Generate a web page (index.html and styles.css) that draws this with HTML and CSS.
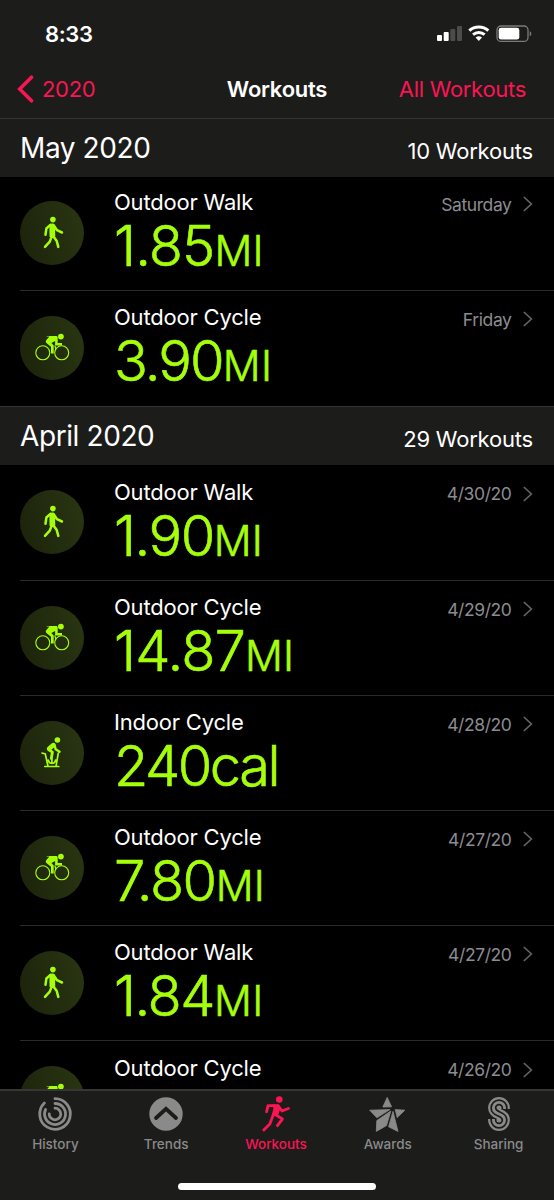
FILE: index.html
```html
<!DOCTYPE html>
<html lang="en">
<head>
<meta charset="utf-8">
<title>Workouts</title>
<link rel="stylesheet" href="styles.css">
</head>
<body>
<svg class="defs" width="0" height="0" aria-hidden="true">
  <symbol id="walk" viewBox="0 0 64 64">
    <circle cx="32.9" cy="18.6" r="2.8"/>
    <path d="M29.4 23.4c1.6-1.2 4.4-1.1 5.5.3l.4 11.8-5.8.6z"/>
    <path class="limb" d="M30.4 23.9l-4 3.6-.9 6.3M34 24.8l3 4.4 5 2.3M32 34.6l-2.2 6-4.8 5.2M33 34.9l3.6 4.8 1.7 6.2"/>
  </symbol>
  <symbol id="cycle" viewBox="0 0 64 64">
    <circle class="wheel" cx="22.8" cy="36.8" r="7"/>
    <circle class="wheel" cx="41.7" cy="36.8" r="7"/>
    <circle cx="40.9" cy="20.6" r="2.9"/>
    <path d="M28.6 20h7.4c1 0 1.7.7 1.7 1.7v5.2H42v2.6h-6.9v-4.6l-3.7 2.2 2.3 2.3v8.2H31v-6.8l-4.6-3.9c-1-.9-.8-1.9 0-2.8l3-3.6H26.6V20z"/>
    <path class="wheel" d="M34.8 29.5l1.2 4"/>
  </symbol>
  <symbol id="indoor" viewBox="0 0 64 64">
    <circle cx="37.4" cy="19" r="2.8"/>
    <g class="body"><path stroke-width="4.6" d="M33.4 24.1l-4.3 3.7"/><path stroke-width="2.8" d="M29 28.8l3.4 2.4-1.1 6.4"/><path stroke-width="2.4" d="M34.7 24.4l.9 3.9 4 2.4"/></g>
    <path class="frame" d="M22 32l3.3 1 2.6 11.8M38.3 32.2l-2.2 12.6M24.8 45.5h14M28.3 39.2c.8 4.4 6.4 4.4 7.3 0M31.9 38v3"/>
  </symbol>
  <symbol id="chev" viewBox="0 0 10 16"><path d="M.8 1l7.6 7-7.6 7" fill="none" stroke="#66666a" stroke-width="1.6"/></symbol>
</svg>
<div class="phone">
  <header class="top">
    <div class="status">
      <span class="time">8:33</span>
      <svg class="indicators" width="96" height="18" viewBox="0 0 96 18">
        <g fill="#fff"><rect x="0" y="10" width="5" height="6" rx="1"/><rect x="6.7" y="7" width="5" height="9" rx="1"/></g>
        <g fill="#4c4c4b"><rect x="13.3" y="4" width="5" height="12" rx="1"/><rect x="20" y="1" width="5" height="15" rx="1"/></g>
        <g fill="none" stroke="#fff" stroke-width="3"><path d="M32.3 5.6a14 14 0 0 1 19 0"/><path d="M36 9.7a8.7 8.7 0 0 1 11.6 0"/></g>
        <path d="M38.6 12.5a5 5 0 0 1 6.4 0L41.8 16z" fill="#fff"/>
        <rect x="60" y="1" width="31" height="15.4" rx="4" fill="none" stroke="#7b7b7a" stroke-width="1.3"/>
        <rect x="61.7" y="2.8" width="20.6" height="11.8" rx="2.4" fill="#fff"/>
        <path d="M92.7 6.2c2.2.8 2.2 4.2 0 5z" fill="#7b7b7a"/>
      </svg>
    </div>
    <nav class="nav">
      <a class="back"><svg width="17" height="28" viewBox="0 0 17 28"><path d="M14.5 2.2L2.7 14l11.8 11.8" fill="none" stroke="#fa1553" stroke-width="3.6" stroke-linecap="round"/></svg><span>2020</span></a>
      <h1>Workouts</h1>
      <a class="all">All Workouts</a>
    </nav>
  </header>
  <main class="list">
    <div class="section pinned"><h2>May 2020</h2><span>10 Workouts</span></div>
    <div class="row"><svg class="badge"><use href="#walk"/></svg><div class="info"><div class="name">Outdoor Walk</div><div class="value wide">1.85<small>MI</small></div></div><div class="date">Saturday<svg width="10" height="16"><use href="#chev"/></svg></div></div>
    <div class="row"><svg class="badge"><use href="#cycle"/></svg><div class="info"><div class="name">Outdoor Cycle</div><div class="value snug">3.90<small>MI</small></div></div><div class="date">Friday<svg width="10" height="16"><use href="#chev"/></svg></div></div>
    <div class="section"><h2>April 2020</h2><span>29 Workouts</span></div>
    <div class="row"><svg class="badge"><use href="#walk"/></svg><div class="info"><div class="name">Outdoor Walk</div><div class="value">1.90<small>MI</small></div></div><div class="date">4/30/20<svg width="10" height="16"><use href="#chev"/></svg></div></div>
    <div class="row"><svg class="badge"><use href="#cycle"/></svg><div class="info"><div class="name">Outdoor Cycle</div><div class="value wide">14.87<small>MI</small></div></div><div class="date">4/29/20<svg width="10" height="16"><use href="#chev"/></svg></div></div>
    <div class="row"><svg class="badge"><use href="#indoor"/></svg><div class="info"><div class="name">Indoor Cycle</div><div class="value energy">240cal</div></div><div class="date">4/28/20<svg width="10" height="16"><use href="#chev"/></svg></div></div>
    <div class="row"><svg class="badge"><use href="#cycle"/></svg><div class="info"><div class="name">Outdoor Cycle</div><div class="value">7.80<small>MI</small></div></div><div class="date">4/27/20<svg width="10" height="16"><use href="#chev"/></svg></div></div>
    <div class="row"><svg class="badge"><use href="#walk"/></svg><div class="info"><div class="name">Outdoor Walk</div><div class="value">1.84<small>MI</small></div></div><div class="date">4/27/20<svg width="10" height="16"><use href="#chev"/></svg></div></div>
    <div class="row"><svg class="badge"><use href="#cycle"/></svg><div class="info"><div class="name">Outdoor Cycle</div></div><div class="date">4/26/20<svg width="10" height="16"><use href="#chev"/></svg></div></div>
  </main>
  <footer class="bottom">
    <div class="tabs">
      <a class="tab"><svg width="36" height="36" viewBox="0 0 36 36"><g fill="none" stroke="#8a8a8a" stroke-width="2.8" stroke-linecap="round"><path d="M18 2.7A15.3 15.3 0 1 1 7.4 7"/><path d="M18 7.5A10.5 10.5 0 1 1 8.6 13.4"/><path d="M18 12.2A5.8 5.8 0 1 1 12.2 18"/></g></svg><span>History</span></a>
      <a class="tab"><svg width="36" height="36" viewBox="0 0 36 36"><circle cx="18" cy="18" r="16.7" fill="#8a8a8a"/><path d="M8 22L18 12.8 28 22" fill="none" stroke="#1c1c1b" stroke-width="3.8" stroke-linecap="round"/></svg><span>Trends</span></a>
      <a class="tab active"><svg width="36" height="36" viewBox="0 0 36 36"><circle cx="20.3" cy="3.5" r="3.3" fill="#fa1553"/><path d="M12.5 8.6l7-.3 1.3 6-2 6-6-1.2 1.7-7z" fill="#fa1553"/><g fill="none" stroke="#fa1553" stroke-width="2.9" stroke-linecap="round" stroke-linejoin="round"><path d="M16 9.6H9l-1.4 6.1M19 9.7l4 5.3 6.4-2.5M14.6 18l-3.8 10-6 6M17 19l6.4 4-5 6.6"/></g></svg><span>Workouts</span></a>
      <a class="tab"><svg width="36" height="36" viewBox="0 0 36 36" fill="#8a8a8a" stroke="#8a8a8a" stroke-width=".8" stroke-linejoin="round"><path d="M17.2 1.4l4.4 9.4-8.8.2z"/><path d="M-.3 14.2l20.2-.6-13 8.2z"/><path d="M6.3 35.4l.5-10.8L20.8 15l-4.3 14.6z"/><path d="M28 35.4l-9.4-4.6 4.4-15.4z"/><path d="M25.2 13.6l9.6.6-7.6 7.4z"/></svg><span>Awards</span></a>
      <a class="tab"><svg width="36" height="36" viewBox="0 0 36 36" fill="none"><path d="M23.6 13v-1a5.6 5.6 0 0 0-11.2 0c0 3.5 2.2 4.6 5.6 6s5.6 2.5 5.6 6a5.6 5.6 0 0 1-11.2 0v-1" stroke="#8a8a8a" stroke-width="10.6"/><path d="M23.6 13.5V12a5.6 5.6 0 0 0-11.2 0c0 3.5 2.2 4.6 5.6 6s5.6 2.5 5.6 6a5.6 5.6 0 0 1-11.2 0v-1.5" stroke="#1c1c1b" stroke-width="6.2"/><path d="M23.6 13v-1a5.6 5.6 0 0 0-11.2 0c0 3.5 2.2 4.6 5.6 6s5.6 2.5 5.6 6a5.6 5.6 0 0 1-11.2 0v-1" stroke="#8a8a8a" stroke-width="2.8"/></svg><span>Sharing</span></a>
    </div>
    <div class="home"></div>
  </footer>
</div>
</body>
</html>
```

FILE: styles.css
```css
* { box-sizing: border-box; }
body { margin: 0; background: #000; color: #fff; font-family: Inter, "Liberation Sans", sans-serif; }
.defs { position: absolute; }
.phone { width: 554px; height: 1200px; overflow: hidden; display: flex; flex-direction: column; }
.top { height: 117.5px; flex: none; background: #1c1c1b; }
.status { height: 60px; padding: 7px 25px 0 45px; display: flex; justify-content: space-between; align-items: center; }
.time { font-size: 22px; font-weight: 600; letter-spacing: -.4px; }
.indicators { margin-right: -4px; }
.nav { height: 57px; padding: 0 28px; display: grid; grid-template-columns: 1fr auto 1fr; align-items: center; font-size: 22px; }
.nav h1 { margin: 0; font-size: 22px; font-weight: 600; letter-spacing: -.25px; }
.nav a { color: #fa1553; }
.back { display: flex; align-items: center; gap: 8px; margin-left: -11px; letter-spacing: -.3px; }
.all { text-align: right; letter-spacing: -.3px; }
.list { flex: 1; min-height: 0; overflow: hidden; }
.section { height: 59.3px; padding: 1px 21px 0 20px; border-top: 1px solid #353535; background: #1c1c1b; display: flex; justify-content: space-between; align-items: center; font-size: 22px; letter-spacing: -.2px; }
.section span { padding-top: 5px; }
.section h2 { margin: 0; font-size: 28px; font-weight: 400; letter-spacing: -.4px; }
.pinned { margin-bottom: -1.5px; position: relative; z-index: 1; }
.row { height: 115.15px; padding-left: 20px; display: flex; align-items: flex-start; position: relative; }
.row + .row::before { content: ""; position: absolute; left: 20px; right: 0; top: -.5px; height: 1px; background: #2b2b2c; }
.badge { width: 64px; height: 64px; margin-top: 25.5px; flex: none; border-radius: 50%; background: linear-gradient(75deg, #1b230a, #2a3613); fill: #a5ff0a; }
.limb { fill: none; stroke: #a5ff0a; stroke-width: 2.5; stroke-linecap: round; stroke-linejoin: round; }
.wheel { fill: none; stroke: #a5ff0a; stroke-width: 1.1; }
.body { fill: none; stroke: #a5ff0a; stroke-linecap: round; stroke-linejoin: round; }
.frame { fill: none; stroke: #a5ff0a; stroke-width: 1.7; stroke-linecap: round; }
.info { flex: 1; padding: 14px 0 0 30px; }
.name { font-size: 22px; line-height: 27px; letter-spacing: -.2px; }
.value { font-size: 56px; line-height: 61px; font-weight: 300; letter-spacing: -1.5px; color: #a5ff0a; -webkit-text-stroke: .6px #a5ff0a; white-space: nowrap; }
.value small { font-size: 42px; line-height: 42px; letter-spacing: .3px; }
.wide { letter-spacing: -.9px; }
.snug { letter-spacing: -1.9px; }
.energy { letter-spacing: -2.5px; }
.date { padding: 18.5px 21.5px 0 0; display: flex; align-items: center; gap: 11px; font-size: 17.5px; line-height: 21px; letter-spacing: -.4px; color: #8c8c91; }
.bottom { height: 111.5px; flex: none; border-top: 2px solid #363636; background: #1c1c1b; display: flex; flex-direction: column; align-items: center; }
.tabs { width: 554px; display: grid; grid-template-columns: repeat(5, 1fr); height: 95px; padding-top: 5px; }
.tab { display: flex; flex-direction: column; align-items: center; font-size: 13.5px; line-height: 18px; font-weight: 500; color: #8a8a8a; gap: 3px; }
.tab svg { overflow: visible; }
.active { color: #fa1553; }
.active span { margin-left: -2px; }
.home { width: 198px; height: 7px; border-radius: 4px; background: #fff; margin-top: -3px; }
```
